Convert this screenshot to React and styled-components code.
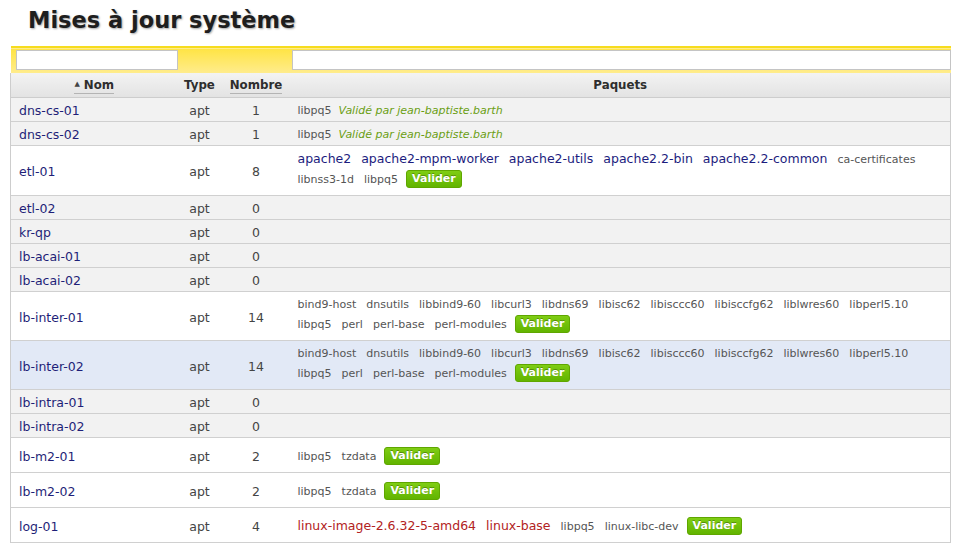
import React from "react"
import styled, { createGlobalStyle } from "styled-components"

const GlobalStyle = createGlobalStyle`
  body {
    margin: 0;
    background: #fff;
    font-family: "DejaVu Sans", Verdana, sans-serif;
  }
`;

const Page = styled.div`
  padding: 2px 6px 0 10px;
`;

const Title = styled.h1`
  margin: 0 0 8px 18px;
  font-size: 22.5px;
  line-height: 36px;
  font-weight: bold;
  color: #1e1e1e;
  text-shadow: 1px 1px 2px rgba(0, 0, 0, 0.35);
`;

const Table = styled.table`
  width: 941px;
  border-collapse: collapse;
  table-layout: fixed;
`;

const FilterRow = styled.tr`
  background: linear-gradient(#ffe445, #ffec8c);
  border-top: 2px solid #f6dc1e;
`;

const FilterCell = styled.td`
  padding: 2px 0 3px ${(p) => p.$pad || 0}px;
  height: 20px;
  vertical-align: top;
`;

const FilterInput = styled.input`
  display: block;
  box-sizing: border-box;
  width: 100%;
  height: 20px;
  margin: 0;
  border: 1px solid #c4c4c4;
  background: #fff;
`;

const HeadRow = styled.tr`
  background: linear-gradient(#f3f3f3, #e3e3e3);
  border-bottom: 1px solid #cdcdcd;
`;

const HeadCell = styled.th`
  height: 24px;
  padding: 0;
  font-size: 11.8px;
  font-weight: bold;
  color: #2e2e2e;
  text-align: center;
  vertical-align: middle;
  &:first-child {
    border-left: 1px solid #cdcdcd;
  }
  &:last-child {
    border-right: 1px solid #cdcdcd;
  }
`;

const SortLabel = styled.span`
  border-bottom: 1px solid #b4b4b4;
  padding-bottom: 1px;
`;

const Arrow = styled.span`
  font-size: 7px;
  vertical-align: 3px;
  margin-right: 4px;
  color: #444;
`;

const Row = styled.tr`
  background: ${(p) => (p.$hl ? "#e2e9f6" : p.$idle ? "#f2f2f2" : "#fff")};
  border-bottom: 1px solid #d0d0d0;
`;

const Cell = styled.td`
  padding: 6px 0 4px ${(p) => (p.$left ? 8 : 0)}px;
  font-size: 12.5px;
  line-height: 13px;
  color: #444;
  text-align: ${(p) => (p.$left ? "left" : "center")};
  vertical-align: middle;
  &:first-child {
    border-left: 1px solid #cdcdcd;
  }
  &:last-child {
    border-right: 1px solid #cdcdcd;
  }
`;

const HostLink = styled.a`
  color: #1f1f78;
  text-decoration: none;
`;

const PackageCell = styled.td`
  padding: 6px 6px 4px 7px;
  vertical-align: middle;
  border-right: 1px solid #cdcdcd;
`;

const PackageList = styled.div`
  display: flex;
  flex-wrap: wrap;
  align-items: center;
  column-gap: 10px;
  row-gap: 1px;
  line-height: 13px;
`;

const colours = {
  normal: "#555",
  important: "#1c1c7e",
  security: "#b22222",
};

const Package = styled.span`
  font-size: ${(p) => (p.$kind === "normal" ? "11px" : "12.5px")};
  line-height: ${(p) => (p.$kind === "normal" ? "13px" : "14px")};
  color: ${(p) => colours[p.$kind]};
  white-space: nowrap;
`;

const Validated = styled.span`
  margin-left: -3px;
  font-size: 11px;
  font-style: italic;
  color: #6a9e12;
`;

const ValidateButton = styled.button`
  margin: 3px 0 3px -2px;
  height: 18px;
  padding: 0 5px;
  border: 1px solid #5fa600;
  border-radius: 3px;
  background: linear-gradient(#7fcd14, #62b400);
  color: #fff;
  font-family: "DejaVu Sans", Verdana, sans-serif;
  font-size: 11px;
  font-weight: bold;
  line-height: 16px;
  text-shadow: 0 -1px 0 rgba(0, 0, 0, 0.3);
  cursor: pointer;
`;

const N = "normal";
const I = "important";
const S = "security";

const inter = [
  "bind9-host", "dnsutils", "libbind9-60", "libcurl3", "libdns69", "libisc62",
  "libisccc60", "libisccfg62", "liblwres60", "libperl5.10", "libpq5", "perl",
  "perl-base", "perl-modules",
].map((name) => [name, N]);

const hosts = [
  { name: "dns-cs-01", count: 1, packages: [["libpq5", N]], validatedBy: "jean-baptiste.barth" },
  { name: "dns-cs-02", count: 1, packages: [["libpq5", N]], validatedBy: "jean-baptiste.barth" },
  {
    name: "etl-01",
    count: 8,
    packages: [
      ["apache2", I], ["apache2-mpm-worker", I], ["apache2-utils", I], ["apache2.2-bin", I],
      ["apache2.2-common", I], ["ca-certificates", N], ["libnss3-1d", N], ["libpq5", N],
    ],
  },
  { name: "etl-02", count: 0 },
  { name: "kr-qp", count: 0 },
  { name: "lb-acai-01", count: 0 },
  { name: "lb-acai-02", count: 0 },
  { name: "lb-inter-01", count: 14, packages: inter },
  { name: "lb-inter-02", count: 14, packages: inter, highlighted: true },
  { name: "lb-intra-01", count: 0 },
  { name: "lb-intra-02", count: 0 },
  { name: "lb-m2-01", count: 2, packages: [["libpq5", N], ["tzdata", N]] },
  { name: "lb-m2-02", count: 2, packages: [["libpq5", N], ["tzdata", N]] },
  {
    name: "log-01",
    count: 4,
    packages: [["linux-image-2.6.32-5-amd64", S], ["linux-base", S], ["libpq5", N], ["linux-libc-dev", N]],
  },
];

function HostRow({ host }) {
  const pending = host.packages && !host.validatedBy;
  return (
    <Row $idle={!pending} $hl={host.highlighted}>
      <Cell $left><HostLink href="#">{host.name}</HostLink></Cell>
      <Cell>apt</Cell>
      <Cell>{host.count}</Cell>
      <PackageCell>
        {host.packages && (
          <PackageList>
            {host.packages.map(([name, kind]) => (
              <Package key={name} $kind={kind}>{name}</Package>
            ))}
            {host.validatedBy && <Validated>Validé par {host.validatedBy}</Validated>}
            {pending && <ValidateButton>Valider</ValidateButton>}
          </PackageList>
        )}
      </PackageCell>
    </Row>
  );
}

export default function App() {
  return (
    <Page>
      <GlobalStyle />
      <Title>Mises à jour système</Title>
      <Table>
        <colgroup>
          <col style={{ width: 167 }} />
          <col style={{ width: 44 }} />
          <col style={{ width: 69 }} />
          <col />
        </colgroup>
        <thead>
          <FilterRow>
            <FilterCell $pad={5}><FilterInput /></FilterCell>
            <FilterCell />
            <FilterCell />
            <FilterCell $pad={1}><FilterInput /></FilterCell>
          </FilterRow>
          <HeadRow>
            <HeadCell><SortLabel><Arrow>▲</Arrow>Nom</SortLabel></HeadCell>
            <HeadCell>Type</HeadCell>
            <HeadCell><SortLabel>Nombre</SortLabel></HeadCell>
            <HeadCell>Paquets</HeadCell>
          </HeadRow>
        </thead>
        <tbody>
          {hosts.map((host) => (
            <HostRow key={host.name} host={host} />
          ))}
        </tbody>
      </Table>
    </Page>
  );
}
